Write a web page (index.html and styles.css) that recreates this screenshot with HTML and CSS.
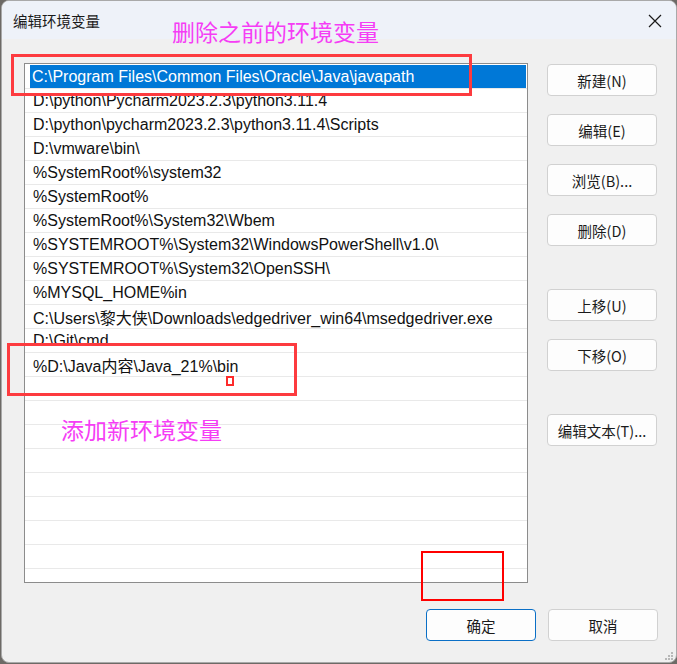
FILE: index.html
```
<!DOCTYPE html>
<html lang="zh-CN">
<head>
<meta charset="utf-8">
<title>编辑环境变量</title>
<link rel="stylesheet" href="styles.css">
</head>
<body>
<div class="window">
  <div class="titlebar">
    <span class="title">编辑环境变量</span>
    <span class="close">
      <svg width="14" height="14" viewBox="0 0 14 14"><path d="M1 1 L13 13 M13 1 L1 13" stroke="#1a1a1a" stroke-width="1.2" fill="none"/></svg>
    </span>
  </div>
  <div class="main">
    <div class="list">
      <div class="row"><span class="sel">C:\Program Files\Common Files\Oracle\Java\javapath</span></div>
      <div class="row"><span class="txt">D:\python\Pycharm2023.2.3\python3.11.4</span></div>
      <div class="row"><span class="txt">D:\python\pycharm2023.2.3\python3.11.4\Scripts</span></div>
      <div class="row"><span class="txt">D:\vmware\bin\</span></div>
      <div class="row"><span class="txt">%SystemRoot%\system32</span></div>
      <div class="row"><span class="txt">%SystemRoot%</span></div>
      <div class="row"><span class="txt">%SystemRoot%\System32\Wbem</span></div>
      <div class="row"><span class="txt">%SYSTEMROOT%\System32\WindowsPowerShell\v1.0\</span></div>
      <div class="row"><span class="txt">%SYSTEMROOT%\System32\OpenSSH\</span></div>
      <div class="row"><span class="txt">%MYSQL_HOME%in</span></div>
      <div class="row"><span class="txt">C:\Users\黎大侠\Downloads\edgedriver_win64\msedgedriver.exe</span></div>
      <div class="row"><span class="txt">D:\Git\cmd</span></div>
      <div class="row"><span class="txt">%D:\Java内容\Java_21%\bin</span></div>
      <div class="row"></div>
      <div class="row"></div>
      <div class="row"></div>
      <div class="row"></div>
      <div class="row"></div>
      <div class="row"></div>
      <div class="row"></div>
      <div class="row"></div>
      <div class="row"></div>
    </div>
    <div class="side">
      <button class="btn">新建(N)</button>
      <button class="btn">编辑(E)</button>
      <button class="btn">浏览(B)...</button>
      <button class="btn">删除(D)</button>
      <button class="btn gap-lg">上移(U)</button>
      <button class="btn">下移(O)</button>
      <button class="btn gap-lg">编辑文本(T)...</button>
    </div>
  </div>
  <div class="footer">
    <button class="btn primary">确定</button>
    <button class="btn">取消</button>
  </div>

  <div class="note note-del">删除之前的环境变量</div>
  <div class="note note-add">添加新环境变量</div>
  <div class="mark mark-1"></div>
  <div class="mark mark-2"></div>
  <div class="mark mark-dot"></div>
  <div class="mark mark-3"></div>
  <div class="grip">
    <svg width="10" height="10" viewBox="0 0 10 10" fill="#b8b8b8"><rect x="7" y="1" width="2" height="2"/><rect x="4" y="4" width="2" height="2"/><rect x="7" y="4" width="2" height="2"/><rect x="1" y="7" width="2" height="2"/><rect x="4" y="7" width="2" height="2"/><rect x="7" y="7" width="2" height="2"/></svg>
  </div>
</div>
</body>
</html>
```

FILE: styles.css
```
* { box-sizing: border-box; }
html, body { margin: 0; padding: 0; }
body {
  width: 677px;
  height: 664px;
  background: #6d6a66;
  font-family: "Noto Sans", "Noto Sans CJK SC", sans-serif;
  color: #1b1b1b;
  overflow: hidden;
}
.window {
  position: relative;
  width: 676px;
  height: 663px;
  margin-left: 1px;
  background: #f0f0f0;
  border: 1px solid #a9a9a9;
  border-radius: 8px;
  overflow: hidden;
  display: flex;
  flex-direction: column;
}
.titlebar {
  height: 38px;
  background: #eef2f9;
  display: flex;
  align-items: center;
  justify-content: space-between;
  padding: 0 14px 0 11px;
  flex: none;
}
.title {
  font-family: "Noto Sans CJK SC", sans-serif;
  font-size: 14.5px;
  color: #1a1a1a;
}
.close { display: flex; margin-top: 1px; }
.main {
  display: flex;
  padding: 24px 0 0 22px;
  gap: 19px;
}
.list {
  width: 504px;
  height: 520px;
  background: #fff;
  border: 1px solid #8c8c8c;
  padding-top: 1px;
  overflow: hidden;
}
.row {
  height: 24px;
  border-bottom: 1px solid #e9e9e9;
  display: flex;
  align-items: stretch;
  font-size: 16px;
  font-family: "Liberation Sans", "Noto Sans CJK SC", sans-serif;
}
.sel {
  flex: 1;
  margin: 0 1px 0 5px;
  background: #0078d7;
  color: #fff;
  padding: 1px 0 0 2px;
  display: flex;
  align-items: center;
}
.txt {
  padding: 1px 0 0 8px;
  display: flex;
  align-items: center;
  color: #111;
}
.side {
  display: flex;
  flex-direction: column;
  gap: 18px;
  padding-top: 1px;
}
.btn {
  width: 110px;
  height: 32px;
  background: #fdfdfd;
  border: 1px solid #d1d1d1;
  border-radius: 4px;
  font-family: "Noto Sans CJK SC", sans-serif;
  font-size: 14.5px;
  color: #1a1a1a;
  padding: 0;
  display: flex;
  align-items: center;
  justify-content: center;
}
.side .gap-lg { margin-top: 25px; }
.footer {
  display: flex;
  justify-content: flex-end;
  gap: 12px;
  padding: 26px 18px 0 0;
}
.btn.primary {
  border-color: #0a6fc6;
}
.note {
  position: absolute;
  font-family: "Noto Sans CJK SC", sans-serif;
  font-size: 23px;
  line-height: 1;
  color: #f53df5;
  white-space: nowrap;
}
.note-del { left: 170px; top: 19px; }
.note-add { left: 59px; top: 417px; }
.mark { position: absolute; }
.mark-1 { left: 9px; top: 53px; width: 461px; height: 42px; border: 3px solid #fd3b3f; }
.mark-2 { left: 5px; top: 342px; width: 290px; height: 53px; border: 3px solid #fd3b3f; }
.mark-dot { left: 224px; top: 375px; width: 8px; height: 10px; border: 2px solid #fd2b2b; }
.mark-3 { left: 419px; top: 550px; width: 83px; height: 50px; border: 2px solid #ff0000; }
.grip { position: absolute; right: 2px; bottom: 1px; display: flex; }
```
